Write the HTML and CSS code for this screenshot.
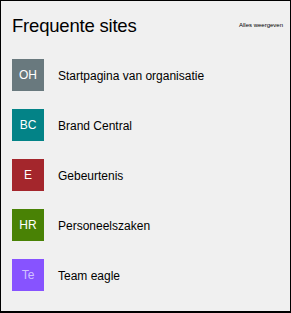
FILE: index.html
```html
<!DOCTYPE html>
<html lang="nl">
<head>
<meta charset="utf-8">
<link rel="stylesheet" href="styles.css">
</head>
<body>
<div class="card">
  <div class="header">
    <h1 class="title">Frequente sites</h1>
    <a class="see-all">Alles weergeven</a>
  </div>
  <ul class="sites">
    <li class="site"><span class="tile gray">OH</span><span class="name">Startpagina van organisatie</span></li>
    <li class="site"><span class="tile teal">BC</span><span class="name">Brand Central</span></li>
    <li class="site"><span class="tile red">E</span><span class="name">Gebeurtenis</span></li>
    <li class="site"><span class="tile green">HR</span><span class="name">Personeelszaken</span></li>
    <li class="site"><span class="tile purple"><span class="faint">Te</span></span><span class="name">Team eagle</span></li>
  </ul>
</div>
</body>
</html>
```
FILE: styles.css
```css
html, body {
  margin: 0;
  padding: 0;
  background: #f0f0f0;
}
.card {
  box-sizing: border-box;
  width: 291px;
  height: 313px;
  border: 1px solid #000;
  border-bottom-width: 2px;
  background: #f0f0f0;
  font-family: "Liberation Sans", Arial, sans-serif;
  color: #000;
  padding: 0 0 0 11px;
}
.header {
  display: flex;
  align-items: flex-start;
  justify-content: space-between;
  padding-top: 13px;
  padding-right: 7px;
  height: 58px;
  box-sizing: border-box;
}
.title {
  margin: 0;
  font-size: 18.5px;
  font-weight: normal;
  line-height: 24px;
  letter-spacing: -0.2px;
}
.see-all {
  font-size: 6px;
  margin-top: 8px;
  color: #000;
}
.sites {
  list-style: none;
  margin: 0;
  padding: 0;
  display: flex;
  flex-direction: column;
  gap: 18px;
}
.site {
  display: flex;
  align-items: center;
  gap: 14px;
  height: 32px;
}
.tile {
  width: 32px;
  height: 32px;
  flex: none;
  display: flex;
  align-items: center;
  justify-content: center;
  color: #fff;
  font-size: 12px;
}
.gray { background: #69797e; }
.teal { background: #038387; }
.red { background: #a4262c; }
.green { background: #498205; }
.purple { background: #8753ff; }
.faint { color: #d2c2ff; }
.name {
  font-size: 12px;
  padding-top: 2px;
}
```
